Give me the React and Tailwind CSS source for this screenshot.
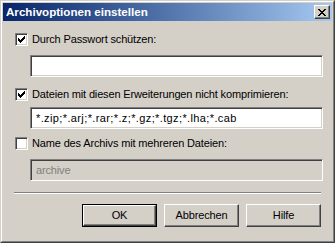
import React from "react"

const font = { fontFamily: "Tahoma, 'Liberation Sans', Arial, sans-serif" }

function Checkbox({ checked }) {
  return (
    <div className="w-[13px] h-[13px] bg-white border-t border-l border-[#808080] border-r-white border-b-white border shadow-[inset_1px_1px_0_#404040,inset_-1px_-1px_0_#d4d0c8] flex items-center justify-center shrink-0">
      {checked && (
        <svg width="7" height="7" viewBox="0 0 7 7" shapeRendering="crispEdges">
          <path d="M0 2h1v3h-1zM1 3h1v3h-1zM2 4h1v3h-1zM3 3h1v3h-1zM4 2h1v3h-1zM5 1h1v3h-1zM6 0h1v3h-1z" fill="#000" />
        </svg>
      )}
    </div>
  )
}

function TextBox({ value, disabled, wide }) {
  return (
    <div
      className={`h-[22px] w-[293px] ml-[29px] border border-t-[#808080] border-l-[#808080] border-r-white border-b-white shadow-[inset_1px_1px_0_#404040,inset_-1px_-1px_0_#d4d0c8] flex items-center pl-[5px] text-[11px] ${
        disabled ? "bg-[#d4d0c8] text-[#808080]" : "bg-white text-black"
      } ${wide ? "tracking-[0.38px]" : ""}`}
    >
      {value}
    </div>
  )
}

function Button({ label, isDefault }) {
  return (
    <div className={`w-[75px] h-[23px] ${isDefault ? "border border-black" : ""}`}>
      <div className="w-full h-full bg-[#d4d0c8] border border-t-white border-l-white border-r-[#404040] border-b-[#404040] shadow-[inset_-1px_-1px_0_#808080] flex items-center justify-center text-[11px] text-black tracking-[-0.15px]">
        {label}
      </div>
    </div>
  )
}

export default function App() {
  return (
    <div
      className="w-[335px] h-[243px] bg-[#d4d0c8] border border-t-[#d4d0c8] border-l-[#d4d0c8] border-r-[#404040] border-b-[#404040] overflow-hidden"
      style={font}
    >
      <div className="w-full h-full border border-t-white border-l-white border-r-[#808080] border-b-[#808080] p-px flex flex-col">
        {/* title bar */}
        <div className="h-[18px] bg-gradient-to-r from-[#0a246a] to-[#a6caf0] flex items-center justify-between pl-[3px] pr-[2px]">
          <span className="text-white font-bold text-[11.6px] leading-none">Archivoptionen einstellen</span>
          <div className="w-[16px] h-[14px] bg-[#d4d0c8] border border-t-white border-l-white border-r-[#404040] border-b-[#404040] shadow-[inset_-1px_-1px_0_#808080] flex items-center justify-center">
            <svg width="8" height="7" viewBox="0 0 8 7" shapeRendering="crispEdges">
              <path d="M0 0h2v1h-2zM6 0h2v1h-2zM1 1h2v1h-2zM5 1h2v1h-2zM2 2h4v1h-4zM3 3h2v1h-2zM2 4h4v1h-4zM1 5h2v1h-2zM5 5h2v1h-2zM0 6h2v1h-2zM6 6h2v1h-2z" fill="#000" />
            </svg>
          </div>
        </div>

        {/* body */}
        <div className="flex flex-col text-[11px] text-black tracking-[-0.15px]">
          <div className="flex items-center gap-[4px] ml-[12px] mt-[12px] h-[13px]">
            <Checkbox checked />
            <span>Durch Passwort schützen:</span>
          </div>
          <div className="mt-[9px] -ml-[2px]">
            <TextBox value="" />
          </div>
          <div className="flex items-center gap-[4px] ml-[12px] mt-[11px] h-[13px]">
            <Checkbox checked />
            <span>Dateien mit diesen Erweiterungen nicht komprimieren:</span>
          </div>
          <div className="mt-[6px] -ml-[2px]">
            <TextBox value="*.zip;*.arj;*.rar;*.z;*.gz;*.tgz;*.lha;*.cab" wide />
          </div>
          <div className="flex items-center gap-[4px] ml-[12px] mt-[8px] h-[13px]">
            <Checkbox />
            <span>Name des Archivs mit mehreren Dateien:</span>
          </div>
          <div className="mt-[9px] -ml-[2px]">
            <TextBox value="archive" disabled />
          </div>

          <div className="mt-[11px] ml-[11px] w-[307px] border-t border-t-[#808080] border-b border-b-white" />

          <div className="flex justify-end gap-[7px] mt-[10px] pr-[11px]">
            <Button label="OK" isDefault />
            <Button label="Abbrechen" />
            <Button label="Hilfe" />
          </div>
        </div>
      </div>
    </div>
  )
}
